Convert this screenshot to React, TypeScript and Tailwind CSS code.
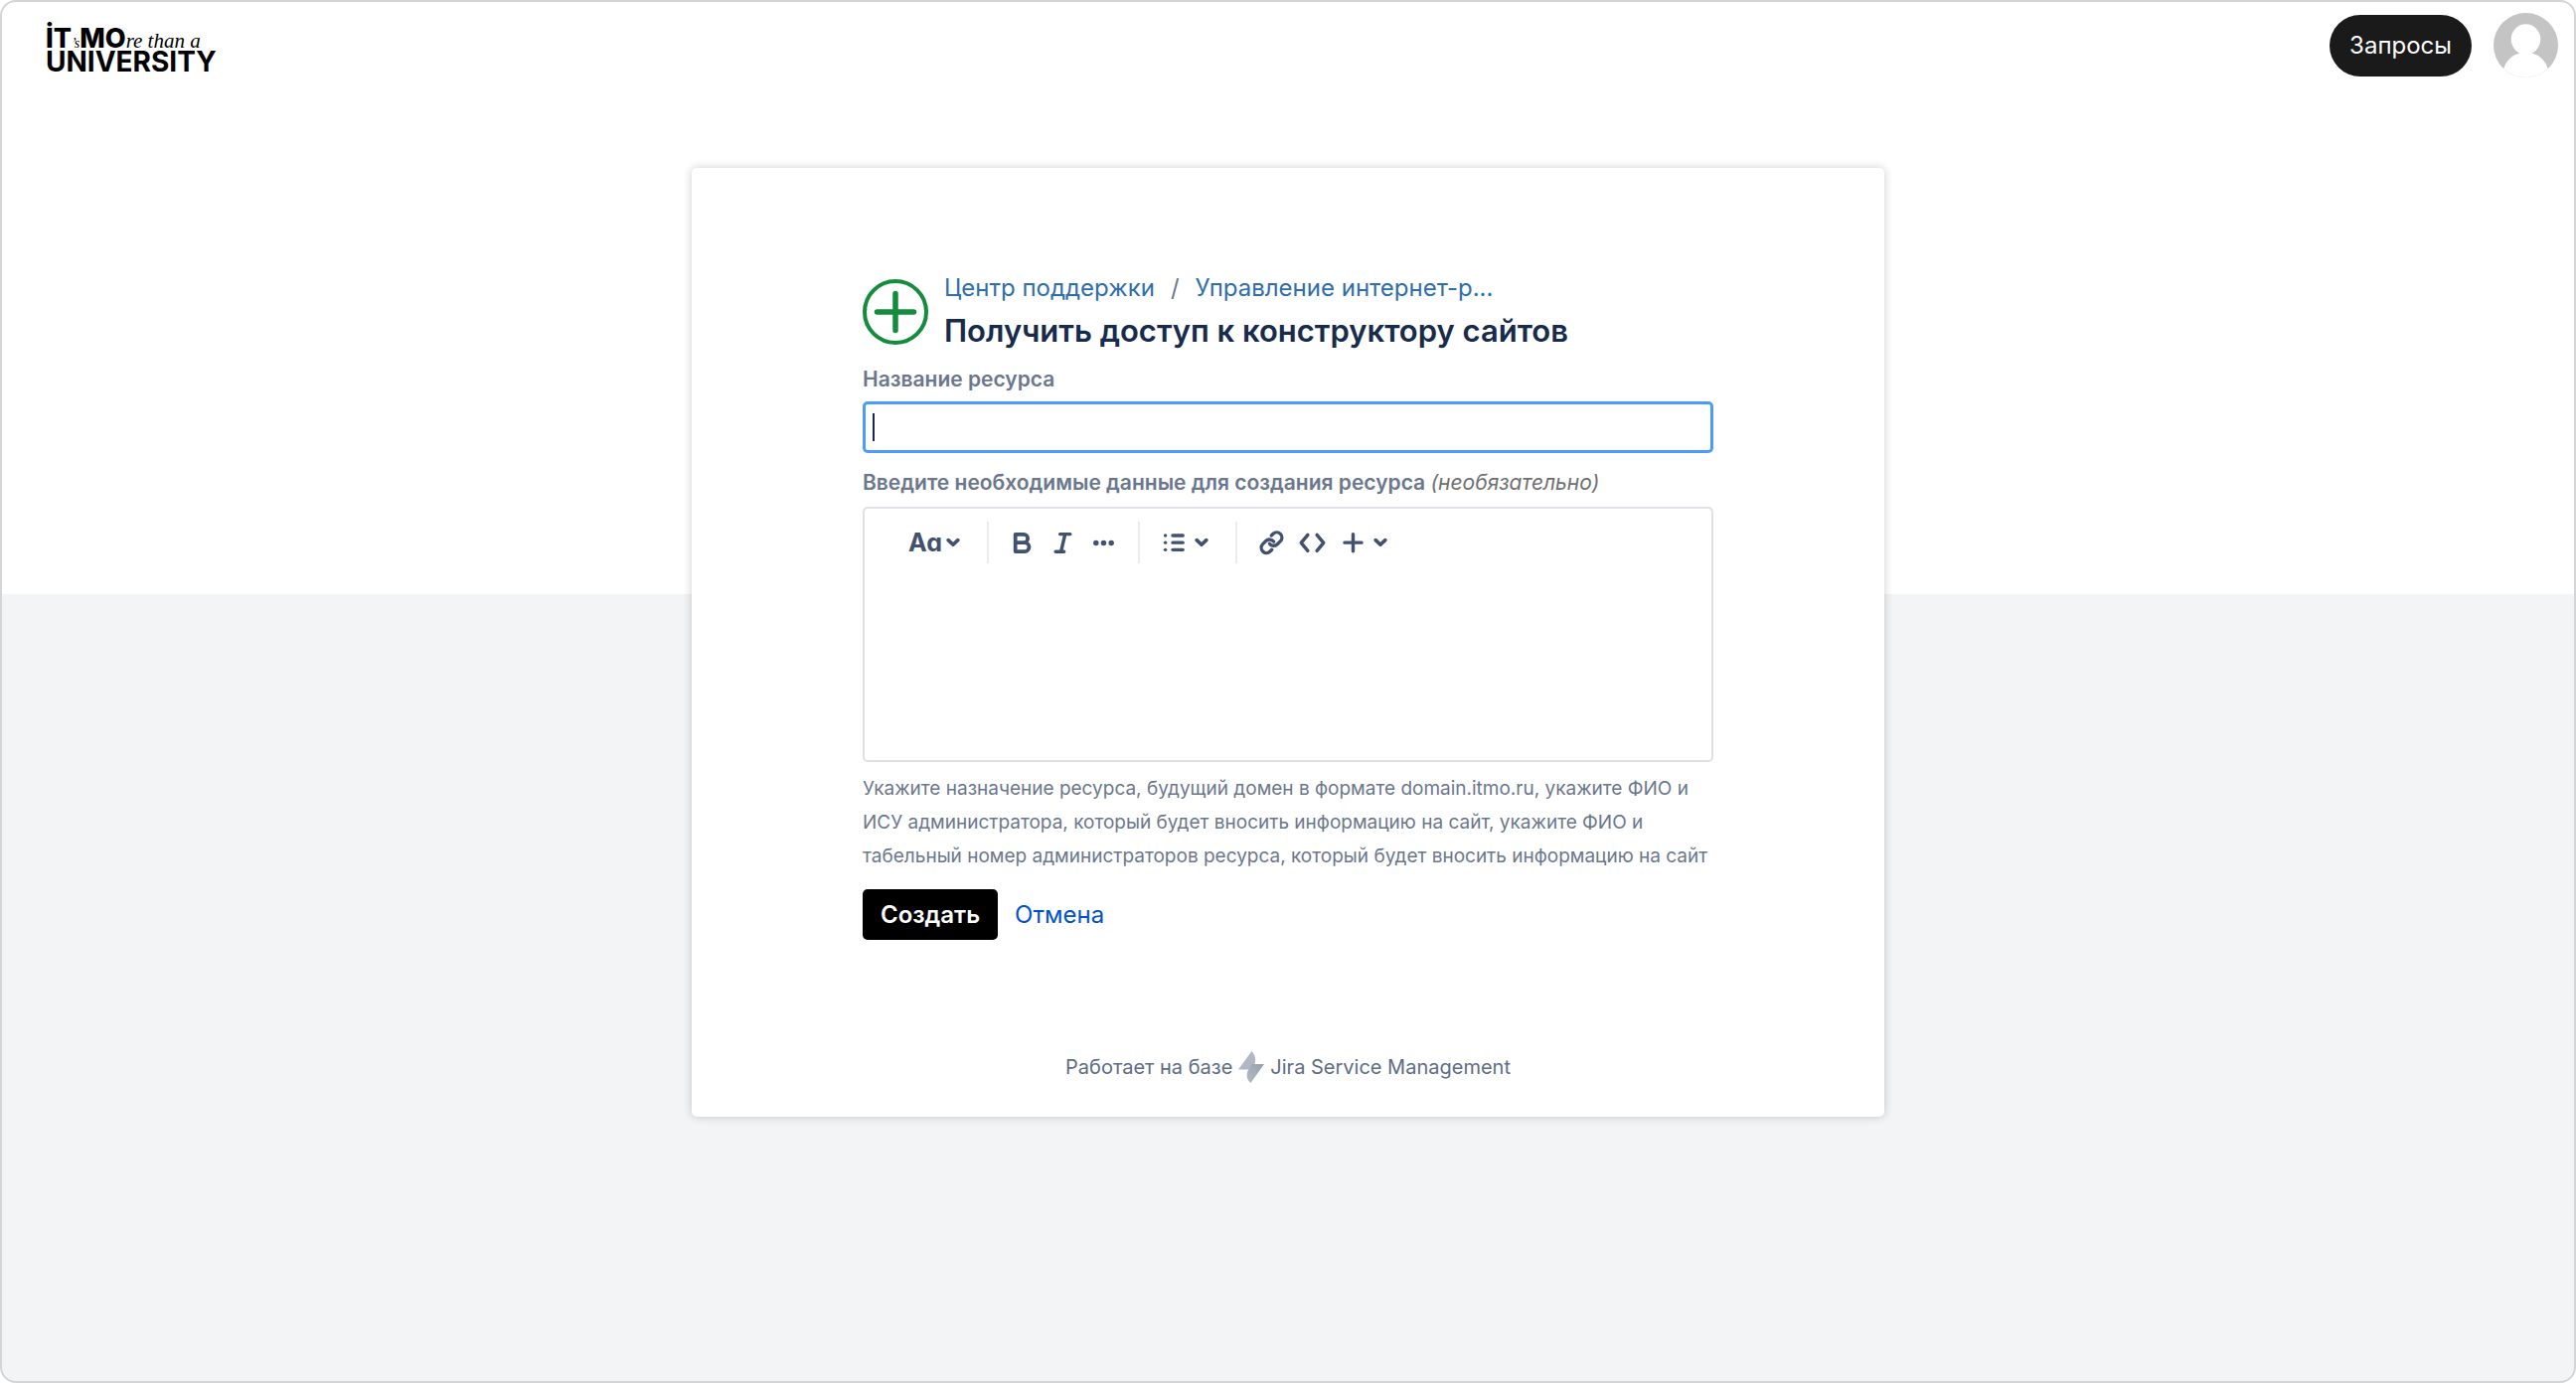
import type { ReactNode } from "react";

function ToolIcon({ children }: { children: ReactNode }) {
  return (
    <svg
      viewBox="0 0 24 24"
      className="size-[41px]"
      fill="none"
      stroke="currentColor"
      strokeWidth="2"
      strokeLinecap="round"
      strokeLinejoin="round"
      aria-hidden="true"
    >
      {children}
    </svg>
  );
}

function Chevron() {
  return (
    <svg viewBox="0 0 14 10" className="h-[10px] w-[14px]" fill="none" stroke="currentColor" strokeWidth="3.600" strokeLinecap="round" strokeLinejoin="round" aria-hidden="true">
      <path d="M2.200 2.600 7 7.200l4.800-4.600" />
    </svg>
  );
}

function Separator() {
  return <span className="h-[42px] w-[2px] bg-[#ebecf0]" />;
}

function Logo() {
  return (
    <a href="#" aria-label="ITMO University" className="block text-black">
      <svg viewBox="0 0 190 56" className="h-14 w-[190px] overflow-visible" fill="currentColor" fontFamily="Inter, sans-serif">
        <text x="0" y="29" fontSize="27" fontWeight="800">
          İT
          <tspan fontSize="14" fontWeight="400" fontStyle="italic" fontFamily="'Liberation Serif', serif">’s</tspan>
          <tspan>MO</tspan>
          <tspan fontSize="21" fontWeight="400" fontStyle="italic" fontFamily="'Liberation Serif', serif">re than a</tspan>
        </text>
        <text x="0" y="53" fontSize="28" fontWeight="700">UNIVERSITY</text>
      </svg>
    </a>
  );
}

function Header() {
  return (
    <header className="flex items-start justify-between pt-[11px] pr-4 pl-11">
      <div className="pt-[6px]">
        <Logo />
      </div>
      <div className="flex items-center gap-[22px]">
        <button type="button" className="h-[62px] rounded-full bg-[#1a1a1a] px-5 text-2xl text-white">
          Запросы
        </button>
        <button type="button" aria-label="Профиль" className="size-[65px] overflow-hidden rounded-full">
          <svg viewBox="0 0 66 66" className="size-full" aria-hidden="true">
            <rect width="66" height="66" fill="#c4c4c4" />
            <ellipse cx="33" cy="27" rx="15" ry="15.500" fill="#fff" />
            <path d="M26 38h14l-1 3c8 2 14 7 17 17L58 66H8L10 58c3-10 9-15 17-17z" fill="#fff" />
          </svg>
        </button>
      </div>
    </header>
  );
}

function Toolbar() {
  return (
    <div role="toolbar" aria-label="Форматирование" className="flex items-center pt-[13px] pl-[44px] text-[#42526e]">
      <button type="button" aria-label="Стиль текста" className="flex items-center gap-1">
        <span className="w-[34px] text-[25px] leading-8 font-bold [font-feature-settings:'cv11']">Aa</span>
        <Chevron />
      </button>
      <span className="w-[27px]" />
      <Separator />
      <span className="w-[13px]" />
      <button type="button" aria-label="Полужирный">
        <ToolIcon>
          <path d="M8 7h4.900a2.400 2.400 0 0 1 0 4.800H8zM8 11.800h5.500a2.600 2.600 0 0 1 0 5.200H8z" strokeWidth="2.200" />
        </ToolIcon>
      </button>
      <button type="button" aria-label="Курсив">
        <ToolIcon>
          <path d="M10.300 6.800h6M7.700 17.100h5M13.300 6.800l-2.400 10.300" />
        </ToolIcon>
      </button>
      <button type="button" aria-label="Ещё">
        <ToolIcon>
          <g fill="currentColor" stroke="none">
            <circle cx="7.500" cy="12" r="1.600" />
            <circle cx="12" cy="12" r="1.600" />
            <circle cx="16.500" cy="12" r="1.600" />
          </g>
        </ToolIcon>
      </button>
      <span className="w-[14px]" />
      <Separator />
      <span className="w-[14px]" />
      <button type="button" aria-label="Списки" className="flex items-center">
        <ToolIcon>
          <path d="M11.100 7.600h6M11.100 11.800h6M11.100 16h6" />
          <g fill="currentColor" stroke="none">
            <circle cx="6.800" cy="7.600" r="1" />
            <circle cx="6.800" cy="11.800" r="1" />
            <circle cx="6.800" cy="16" r="1" />
          </g>
        </ToolIcon>
        <Chevron />
      </button>
      <span className="w-[27px]" />
      <Separator />
      <span className="w-[14px]" />
      <button type="button" aria-label="Ссылка">
        <ToolIcon>
          <g transform="translate(12 11.800) scale(.61) translate(-12 -12)" strokeWidth="3.200">
            <path d="M10 13a5 5 0 0 0 7.540.54l3-3a5 5 0 0 0-7.070-7.070l-1.720 1.710" />
            <path d="M14 11a5 5 0 0 0-7.540-.54l-3 3a5 5 0 0 0 7.070 7.070l1.710-1.710" />
          </g>
        </ToolIcon>
      </button>
      <button type="button" aria-label="Код">
        <ToolIcon>
          <path d="M9.300 7.200 5.400 11.900l3.900 4.700M14.700 7.200l3.900 4.700-3.900 4.700" />
        </ToolIcon>
      </button>
      <button type="button" aria-label="Вставить" className="flex items-center">
        <ToolIcon>
          <path d="M12 6.800v10M7 11.800h10" />
        </ToolIcon>
        <Chevron />
      </button>
    </div>
  );
}

function RequestForm() {
  return (
    <form className="flex flex-col">
      <div className="flex items-start gap-4">
        <svg viewBox="0 0 66 66" className="mt-[9px] size-[66px] shrink-0" fill="none" stroke="#148c3e" strokeLinecap="round" aria-hidden="true">
          <circle cx="33" cy="33" r="31" strokeWidth="4" />
          <path d="M33 14.500v37M14.500 33h37" strokeWidth="5.500" />
        </svg>
        <div>
          <nav aria-label="Навигация" className="flex gap-4 text-2xl leading-9 text-[#6b778c]">
            <a href="#" className="text-[#2f6dab]">Центр поддержки</a>
            <span>/</span>
            <a href="#" className="text-[#2f6dab]">Управление интернет-р...</a>
          </nav>
          <h1 className="text-[31px] leading-[50px] font-semibold text-[#172b4d]">Получить доступ к конструктору сайтов</h1>
        </div>
      </div>

      <label htmlFor="resource" className="mt-[10px] text-[21px] leading-7 font-semibold text-[#6b778c]">
        Название ресурса
      </label>
      <div className="relative mt-2">
        <input
          id="resource"
          type="text"
          className="block h-[52px] w-full rounded-[5px] border-[3px] border-[#4c9aff] bg-white px-2 text-2xl text-[#172b4d] outline-none"
        />
        <span className="absolute top-3 left-[10px] h-7 w-[2px] bg-[#172b4d]" />
      </div>

      <label htmlFor="details" className="mt-4 text-[21px] leading-7 font-semibold text-[#6b778c]">
        Введите необходимые данные для создания ресурса{" "}
        <em className="font-normal text-[#707070]">(необязательно)</em>
      </label>
      <div className="mt-[10px] flex h-[257px] flex-col rounded-[5px] border-2 border-[#dfe1e6] bg-white">
        <Toolbar />
        <textarea id="details" aria-describedby="details-help" className="w-full flex-1 resize-none px-11 py-3 text-2xl outline-none" />
      </div>
      <p id="details-help" className="mt-[10px] text-[19px] leading-[34px] text-[#6b778c]">
        Укажите назначение ресурса, будущий домен в формате domain.itmo.ru, укажите ФИО и
        ИСУ администратора, который будет вносить информацию на сайт, укажите ФИО и
        табельный номер администраторов ресурса, который будет вносить информацию на сайт
      </p>

      <div className="mt-4 flex items-center gap-[17px] text-2xl">
        <button type="submit" className="h-[51px] rounded-[5px] bg-black px-[18px] font-semibold text-white">
          Создать
        </button>
        <button type="button" className="text-[#0052cc]">Отмена</button>
      </div>
    </form>
  );
}

function PoweredBy() {
  return (
    <footer className="flex items-center justify-center gap-[6px] text-xl leading-8 text-[#5e6c84]">
      <span>Работает на базе</span>
      <svg viewBox="0 0 26 32" className="h-8 w-[26px]" aria-hidden="true">
        <defs>
          <linearGradient id="bolt" x1="1" y1="0" x2="0" y2="1">
            <stop offset="0" stopColor="#97a0af" />
            <stop offset="1" stopColor="#b3bac5" />
          </linearGradient>
        </defs>
        <path d="M13.500 0C17 4 18 8 16.500 13L13 18.500H0z" fill="#b1b8c4" />
        <path d="M12.500 32C8.500 29 8 24 9.500 20L13.500 13H26z" fill="url(#bolt)" />
      </svg>
      <a href="#">Jira Service Management</a>
    </footer>
  );
}

export default function App() {
  return (
    <div className="min-h-screen bg-white font-[Inter,'Noto_Sans',sans-serif]">
      <div className="flex min-h-screen flex-col rounded-[16px] border-2 border-[#d5d5d5] bg-[linear-gradient(#ffffff_596px,#f3f4f6_596px)]">
        <Header />
        <main className="mx-auto mt-[91px] w-full max-w-[1200px] rounded-[5px] bg-white px-[172px] pt-[103px] pb-[34px] shadow-[0_0_10px_rgba(0,0,0,0.2)]">
          <RequestForm />
          <div className="mt-28">
            <PoweredBy />
          </div>
        </main>
      </div>
    </div>
  );
}
